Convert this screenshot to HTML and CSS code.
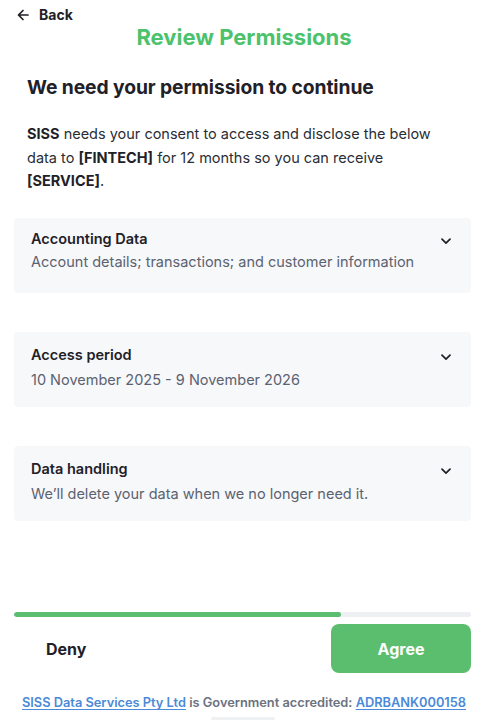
FILE: index.html
```html
<!DOCTYPE html>
<html>
<head>
<meta charset="utf-8">
<link rel="stylesheet" href="styles.css">
</head>
<body>
<div class="page">
  <div class="back">
    <svg class="back-icon" width="12" height="12" viewBox="0 0 12 12"><path d="M11 6H1.5M6 1.5L1.5 6 6 10.5" fill="none" stroke="#1f2128" stroke-width="1.7" stroke-linecap="round" stroke-linejoin="round"/></svg>
    <span>Back</span>
  </div>
  <h1 class="title">Review Permissions</h1>
  <div class="content">
    <h2 class="heading">We need your permission to continue</h2>
    <p class="intro"><b>SISS</b> needs your consent to access and disclose the below data to <b>[FINTECH]</b> for 12 months so you can receive <b>[SERVICE]</b>.</p>
  </div>
  <div class="cards">
    <div class="card card-first">
      <div class="card-text">
        <div class="card-title">Accounting Data</div>
        <div class="card-sub">Account details; transactions; and customer information</div>
      </div>
      <svg class="chev" width="10" height="7" viewBox="0 0 10 7"><path d="M1 1.2L5 5.2 9 1.2" fill="none" stroke="#1f2128" stroke-width="1.7" stroke-linecap="round" stroke-linejoin="round"/></svg>
    </div>
    <div class="card">
      <div class="card-text">
        <div class="card-title">Access period</div>
        <div class="card-sub">10 November 2025 - 9 November 2026</div>
      </div>
      <svg class="chev" width="10" height="7" viewBox="0 0 10 7"><path d="M1 1.2L5 5.2 9 1.2" fill="none" stroke="#1f2128" stroke-width="1.7" stroke-linecap="round" stroke-linejoin="round"/></svg>
    </div>
    <div class="card">
      <div class="card-text">
        <div class="card-title">Data handling</div>
        <div class="card-sub">We’ll delete your data when we no longer need it.</div>
      </div>
      <svg class="chev" width="10" height="7" viewBox="0 0 10 7"><path d="M1 1.2L5 5.2 9 1.2" fill="none" stroke="#1f2128" stroke-width="1.7" stroke-linecap="round" stroke-linejoin="round"/></svg>
    </div>
  </div>
  <div class="progress"><div class="progress-fill" style="width: 71.5%"></div></div>
  <div class="actions">
    <button class="btn-deny">Deny</button>
    <button class="btn-agree">Agree</button>
  </div>
  <p class="footer"><a href="#">SISS Data Services Pty Ltd</a> is Government accredited: <a href="#">ADRBANK000158</a></p>
  <div class="home-indicator"></div>
</div>
</body>
</html>
```

FILE: styles.css
```css
* { box-sizing: border-box; }
html, body { margin: 0; padding: 0; background: #ffffff; }
body {
  font-family: Inter, "Noto Sans", "Liberation Sans", sans-serif;
  color: #1f2128;
  width: 488px;
  height: 720px;
  overflow: hidden;
}
.page {
  padding: 0 17px 0 14px;
  display: flex;
  flex-direction: column;
  height: 720px;
}
.back {
  display: flex;
  align-items: center;
  gap: 10px;
  padding: 3px 0 0 3px;
  height: 29px;
  font-size: 14px;
  font-weight: 700;
}
.title {
  margin: 0;
  text-align: center;
  font-size: 22px;
  font-weight: 700;
  color: #4cc26c;
  line-height: 22px;
  padding-left: 3px;
}
.content { padding: 0 13px; }
.heading {
  margin: 26px 0 0;
  font-size: 19.3px;
  font-weight: 700;
  line-height: 26px;
  letter-spacing: -0.1px;
}
.intro {
  margin: 22px 0 0;
  font-size: 14.5px;
  line-height: 23.5px;
  color: #2a2d35;
}
.intro b { font-weight: 700; color: #1f2128; }
.cards {
  display: flex;
  flex-direction: column;
  gap: 39px;
  margin-top: 25px;
}
.card {
  background: #f7f8fa;
  border-radius: 4px;
  height: 75px;
  padding: 13px 20px 0 17px;
  display: flex;
  justify-content: space-between;
  align-items: flex-start;
}
.card-title {
  font-size: 14.5px;
  font-weight: 600;
  line-height: 20px;
}
.card-sub {
  margin-top: 5px;
  font-size: 14.5px;
  line-height: 20px;
  color: #5b6270;
}
.card-first { padding-top: 11px; }
.card-first .card-sub { margin-top: 3px; }
.chev { margin-top: 9px; }
.progress {
  margin-top: 91px;
  height: 6px;
  border-radius: 3px;
  background: #eef0f4;
  overflow: hidden;
}
.progress-fill {
  height: 100%;
  border-radius: 3px;
  background: #5bbe6f;
}
.actions {
  display: flex;
  justify-content: space-between;
  align-items: center;
  margin-top: 7px;
}
.btn-deny {
  border: none;
  background: none;
  font-family: inherit;
  font-size: 16px;
  font-weight: 700;
  color: #1f2128;
  padding: 0 0 0 32px;
  height: 49px;
}
.btn-agree {
  border: none;
  background: #5bbe6f;
  color: #ffffff;
  font-family: inherit;
  font-size: 16px;
  font-weight: 700;
  width: 140px;
  height: 49px;
  border-radius: 8px;
}
.footer {
  margin: 21px 0 0;
  text-align: center;
  font-size: 12.8px;
  font-weight: 600;
  color: #6b7280;
  line-height: 18px;
  padding-left: 3px;
  white-space: nowrap;
}
.footer a {
  color: #4a8ad8;
  text-decoration: underline;
  text-underline-offset: 2px;
}
.home-indicator {
  align-self: center;
  width: 64px;
  height: 3px;
  border-radius: 2px;
  background: #f0f1f3;
  margin-top: 5px;
}
```
